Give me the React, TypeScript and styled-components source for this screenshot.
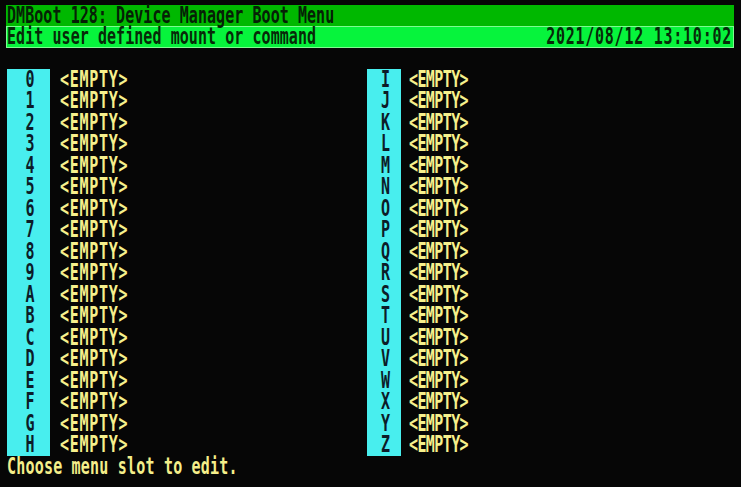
import React from "react";
import styled, { createGlobalStyle } from "styled-components";

const Global = createGlobalStyle`
  html, body { margin: 0; padding: 0; background: #060606; }
  body { width: 741px; height: 487px; overflow: hidden; }
`;

const ROW = 21.5;

const Screen = styled.div`
  width: 741px;
  height: 487px;
  box-sizing: border-box;
  padding: 5px 0 0 6px;
  background: #060606;
  font-family: "DejaVu Sans Mono", "Liberation Mono", monospace;
  font-weight: bold;
  font-size: 15px;
`;

const Glyphs = styled.span<{ $ls?: number }>`
  display: inline-block;
  line-height: 14px;
  vertical-align: middle;
  transform: scaleY(1.5);
  transform-origin: 50% 55%;
  letter-spacing: ${(p) => (p.$ls ?? 0.06)}px;
  white-space: pre;
`;

const TitleBar = styled.div`
  width: 728px;
  height: 21px;
  line-height: 21px;
  background: #00b800;
  color: #062006;
  padding-left: 1px;
  box-sizing: border-box;
`;

const StatusBar = styled.div`
  width: 728px;
  height: 22px;
  line-height: 20px;
  background: #06f43c;
  border: 1px solid #7dfc90;
  color: #062a08;
  box-sizing: border-box;
  display: flex;
  align-items: center;
  justify-content: space-between;
  padding: 0 1px 0 0;
`;

const Menu = styled.div`
  margin-top: 21px;
  display: grid;
  grid-template-columns: 361px 1fr;
`;

const Column = styled.div<{ $gap: number; $pad: number }>`
  display: flex;
  gap: ${(p) => p.$gap}px;
  padding-left: ${(p) => p.$pad}px;
`;

const Labels = styled.div<{ $w: number }>`
  width: ${(p) => p.$w}px;
  background: #48eeee;
  color: #0c1c28;
  display: flex;
  flex-direction: column;
  align-items: center;
  padding-left: 3px;
  box-sizing: border-box;
`;

const Cell = styled.div`
  height: ${ROW}px;
  line-height: ${ROW}px;
`;

const Entries = styled.div`
  display: flex;
  flex-direction: column;
  color: #f6f08c;
`;

const Footer = styled.div`
  height: ${ROW}px;
  line-height: ${ROW}px;
  color: #f4ee8a;
  padding-left: 1px;
`;

const left = "0123456789ABCDEFGH".split("");
const right = "IJKLMNOPQRSTUVWXYZ".split("");

function MenuColumn({
  keys,
  labelW,
  gap,
  pad,
  ls,
}: {
  keys: string[];
  labelW: number;
  gap: number;
  pad: number;
  ls: number;
}) {
  return (
    <Column $gap={gap} $pad={pad}>
      <Labels $w={labelW}>
        {keys.map((k) => (
          <Cell key={k}>
            <Glyphs>{k}</Glyphs>
          </Cell>
        ))}
      </Labels>
      <Entries>
        {keys.map((k) => (
          <Cell key={k}>
            <Glyphs $ls={ls}>{"<EMPTY>"}</Glyphs>
          </Cell>
        ))}
      </Entries>
    </Column>
  );
}

export default function App() {
  return (
    <>
      <Global />
      <Screen>
        <TitleBar>
          <Glyphs>DMBoot 128: Device Manager Boot Menu</Glyphs>
        </TitleBar>
        <StatusBar>
          <Glyphs>Edit user defined mount or command</Glyphs>
          <Glyphs $ls={0.75}>2021/08/12 13:10:02</Glyphs>
        </StatusBar>
        <Menu>
          <MenuColumn keys={left} labelW={43} gap={10} pad={1} ls={0.7} />
          <MenuColumn keys={right} labelW={34} gap={8} pad={0} ls={-0.6} />
        </Menu>
        <Footer>
          <Glyphs $ls={0.2}>Choose menu slot to edit.</Glyphs>
        </Footer>
      </Screen>
    </>
  );
}
